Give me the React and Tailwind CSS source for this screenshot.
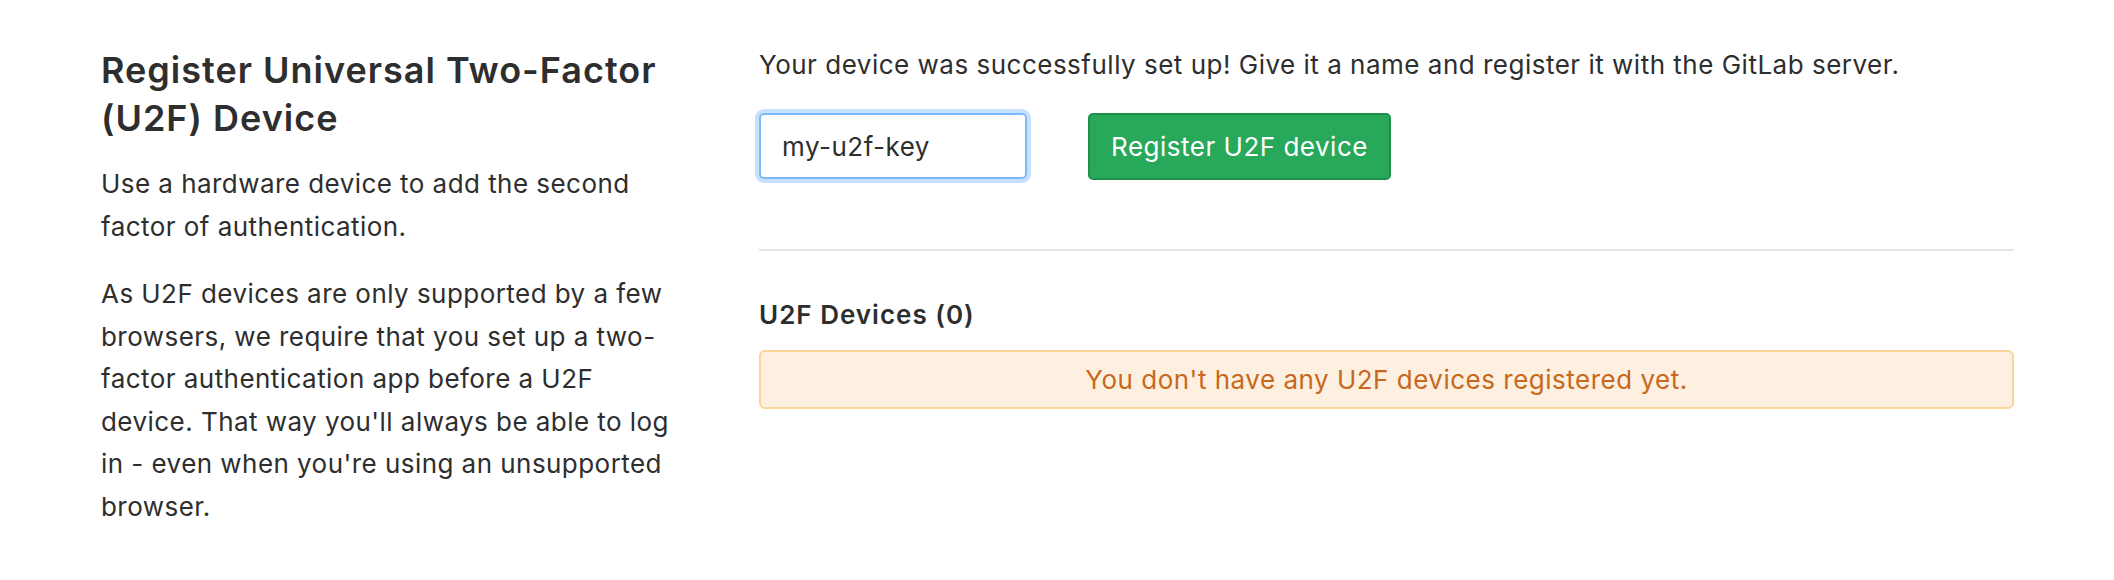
import React from "react";

const font = { fontFamily: "Inter, 'Noto Sans', sans-serif" };

const App = () => {
  return (
    <div
      className="min-h-[580px] bg-white text-[#2e2e2e] flex pl-[101px] pt-[45px]"
      style={font}
    >
      {/* Left column: description */}
      <div className="w-[590px] shrink-0 pt-[1px]">
        <h4 className="text-[36px] leading-[48px] font-semibold tracking-[1px]">
          Register Universal Two-Factor (U2F) Device
        </h4>
        <p className="text-[26px] leading-[42.5px] tracking-[0.45px] mt-[21px]">
          Use a hardware device to add the second factor of authentication.
        </p>
        <p className="text-[26px] leading-[42.5px] tracking-[0.45px] mt-[25px]">
          As U2F devices are only supported by a few browsers, we require that
          you set up a two-factor authentication app before a U2F device. That
          way you'll always be able to log in - even when you're using an
          unsupported browser.
        </p>
      </div>

      {/* Right column: registration form */}
      <div className="w-[1255px] ml-[68px]">
        <p className="text-[26px] leading-[40.5px] tracking-[0.5px]">
          Your device was successfully set up! Give it a name and register it
          with the GitLab server.
        </p>
        <div className="flex items-center gap-[61px] mt-[27px]">
          <input
            type="text"
            defaultValue="my-u2f-key"
            className="w-[268px] h-[66px] px-[21px] text-[26px] tracking-[0.5px] text-[#2e2e2e] bg-white border-2 border-[#7fb8f5] rounded-[5px] outline-none shadow-[0_0_0_4px_#c6e0fd]"
            style={font}
          />
          <button className="w-[303px] h-[67px] text-[26px] tracking-[0.5px] text-white bg-[#28a85a] border-2 border-[#1f9049] rounded-[5px]">
            Register U2F device
          </button>
        </div>

        <div className="h-[2px] bg-[#e5e5e5] mt-[69px]" />

        <h5 className="text-[26px] leading-[40.5px] font-semibold tracking-[1px] mt-[44px]">
          U2F Devices (0)
        </h5>
        <div className="mt-[15px] h-[59px] flex items-center justify-center bg-[#fdf0e0] border-2 border-[#fbd59c] rounded-[6px] text-[26px] tracking-[0.5px] text-[#c8681c]">
          You don't have any U2F devices registered yet.
        </div>
      </div>
    </div>
  );
};

export default App;
